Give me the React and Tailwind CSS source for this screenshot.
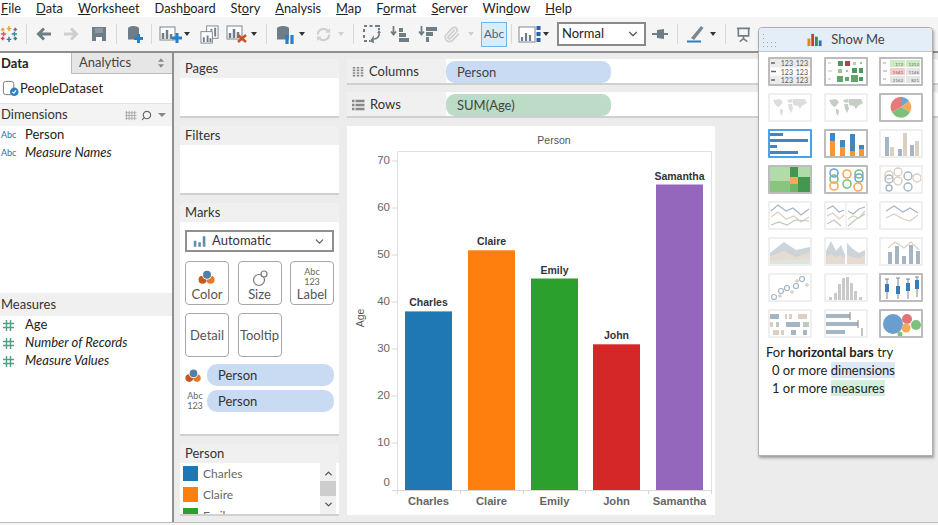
import React from 'react';
import { ChevronDown, ChevronUp, Paperclip, Search } from 'lucide-react';

const menus = [
  ['F', 'ile'], ['D', 'ata'], ['W', 'orksheet'], ['Dash', 'b', 'oard'], ['St', 'o', 'ry'], ['A', 'nalysis'],
  ['M', 'ap'], ['F', 'o', 'rmat'], ['S', 'erver'], ['Win', 'd', 'ow'], ['H', 'elp'],
];

const bars = [
  { name: 'Charles', age: 38, color: '#1f77b4', x: 405 },
  { name: 'Claire', age: 51, color: '#ff7f0e', x: 468 },
  { name: 'Emily', age: 45, color: '#2ca02c', x: 531 },
  { name: 'John', age: 31, color: '#d62728', x: 593 },
  { name: 'Samantha', age: 65, color: '#9467bd', x: 656 },
];

function MenuLabel({ parts }) {
  if (parts.length === 2) {
    return <span><span className="underline">{parts[0]}</span>{parts[1]}</span>;
  }
  return <span>{parts[0]}<span className="underline">{parts[1]}</span>{parts[2]}</span>;
}

function BarsIcon({ className = '' }) {
  return (
    <svg viewBox="0 0 20 16" className={className}>
      <rect x="1" y="7" width="3.5" height="8" fill="#5f8fae" />
      <rect x="7" y="9" width="3.5" height="6" fill="#5f8fae" />
      <rect x="13" y="1" width="3.5" height="14" fill="#5f8fae" />
    </svg>
  );
}

function ColorIcon({ className = '' }) {
  return (
    <svg viewBox="0 0 20 18" className={className}>
      <circle cx="5" cy="12" r="4.5" fill="#c9561d" />
      <circle cx="14" cy="12" r="4.5" fill="#e8772a" />
      <circle cx="10" cy="6.5" r="5.5" fill="#fff" />
      <circle cx="10" cy="6.5" r="4.5" fill="#4f81a8" />
    </svg>
  );
}

function AbcIcon() {
  return (
    <span className="flex flex-col items-center text-[9px] leading-[10px] text-[#666]">
      <span>Abc</span>
      <span>123</span>
    </span>
  );
}

function Caret({ className = '', light }) {
  return (
    <span className={`h-0 w-0 shrink-0 border-x-[3px] border-t-[4px] border-x-transparent ${light ? 'border-t-[#cfcfcf]' : 'border-t-[#333]'} ${className}`} />
  );
}

function Sep({ className = '' }) {
  return <span className={`h-[20px] w-px shrink-0 bg-[#d8d8d8] ${className}`} />;
}

function Toolbar() {
  return (
    <div className="flex h-[34px] items-center bg-[#f5f5f5] text-[#666]">
      <svg viewBox="0 0 20 20" className="h-[18px] w-[18px] shrink-0">
        <g strokeWidth="1.6">
          <path d="M10 1v6M7.5 4h5" stroke="#e8a13a" />
          <path d="M10 13v6M7.5 16h5" stroke="#3f6f9f" />
          <path d="M1 10h6M4 7.5v5" stroke="#e05a4f" />
          <path d="M13 10h6M16 7.5v5" stroke="#2a8f9f" />
          <path d="M3 3v4M1 5h4" stroke="#e8a13a" />
          <path d="M17 3v4M15 5h4" stroke="#8a5aa8" />
          <path d="M3 13v4M1 15h4" stroke="#c9406a" />
          <path d="M17 13v4M15 15h4" stroke="#3f6f9f" />
        </g>
      </svg>
      <Sep className="ml-[8px]" />
      <svg viewBox="0 0 16 16" className="ml-[9px] h-[16px] w-[16px] shrink-0">
        <path d="M15 8H3M8 2.5L2.5 8 8 13.5" stroke="#6f7d87" strokeWidth="3" fill="none" />
      </svg>
      <svg viewBox="0 0 16 16" className="ml-[11px] h-[16px] w-[16px] shrink-0">
        <path d="M1 8h12M8 2.5L13.5 8 8 13.5" stroke="#cfcfcf" strokeWidth="3" fill="none" />
      </svg>
      <svg viewBox="0 0 16 16" className="ml-[12px] h-[16px] w-[16px] shrink-0">
        <path d="M1 1h14v14H1z" fill="#6f7d87" />
        <path d="M4 2h8v5H4z" fill="#8d99a2" />
        <path d="M5 11h6v4H5z" fill="#fff" />
      </svg>
      <Sep className="ml-[9px]" />
      <svg viewBox="0 0 16 18" className="ml-[10px] h-[18px] w-[16px] shrink-0">
        <ellipse cx="6.5" cy="3.5" rx="5.5" ry="2.5" fill="#6f7d87" />
        <rect x="1" y="3.5" width="11" height="11" fill="#6f7d87" />
        <path d="M11.5 9v9M7 13.5h9" stroke="#2a7fc4" strokeWidth="3" />
      </svg>
      <Sep className="ml-[8px]" />
      <svg viewBox="0 0 24 18" className="ml-[7px] h-[18px] w-[24px] shrink-0">
        <rect x="1" y="2" width="15" height="13" fill="#fff" stroke="#7b8790" />
        <path d="M4 14V8M8 14V5M12 14V9" stroke="#6f7d87" strokeWidth="2.5" />
        <path d="M18 8v10M13 13h10" stroke="#2a7fc4" strokeWidth="3" />
      </svg>
      <Caret className="ml-px" />
      <svg viewBox="0 0 20 20" className="ml-[10px] h-[19px] w-[19px] shrink-0">
        <rect x="7" y="1" width="12" height="13" fill="#fff" stroke="#7b8790" />
        <rect x="1" y="7" width="12" height="12" fill="#fff" stroke="#7b8790" />
        <path d="M4 18v-5M8 18v-7M11 18v-4M12 6V4M16 12V3" stroke="#6f7d87" strokeWidth="2" />
      </svg>
      <svg viewBox="0 0 21 18" className="ml-[7px] h-[18px] w-[21px] shrink-0">
        <rect x="1" y="1" width="15" height="13" fill="#fff" stroke="#7b8790" />
        <path d="M4 13V8M8 13V4M12 13V7" stroke="#6f7d87" strokeWidth="2.5" />
        <path d="M12 10l8 7M20 10l-8 7" stroke="#c9502a" strokeWidth="2.5" />
      </svg>
      <Caret className="ml-[4px]" />
      <Sep className="ml-[9px]" />
      <svg viewBox="0 0 19 19" className="ml-[9px] h-[19px] w-[19px] shrink-0">
        <ellipse cx="7" cy="3.5" rx="6" ry="2.5" fill="#6f7d87" />
        <rect x="1" y="3.5" width="12" height="11" fill="#6f7d87" />
        <path d="M11 10v9M16 10v9" stroke="#2a7fc4" strokeWidth="3.2" />
      </svg>
      <Caret className="ml-[4px]" />
      <svg viewBox="0 0 16 16" className="ml-[11px] h-[15px] w-[15px] shrink-0">
        <path d="M2 8a6 6 0 0 1 10.5-4M14 8a6 6 0 0 1-10.5 4" stroke="#cfcfcf" strokeWidth="2.4" fill="none" />
        <path d="M10 6h5V1zM6 10H1v5z" fill="#cfcfcf" />
      </svg>
      <Caret light className="ml-[7px]" />
      <Sep className="ml-[9px]" />
      <svg viewBox="0 0 18 18" className="ml-[9px] h-[18px] w-[18px] shrink-0">
        <path d="M1 1h3M6.5 1h3M12 1h5M1 4v3M1 10v3M1 16h3M6 16h1M16 3v2" stroke="#6f7d87" strokeWidth="2" fill="none" />
        <path d="M16 8a5 5 0 0 1-5 6M8 16l2-3v4z" stroke="#6f7d87" strokeWidth="1.7" fill="none" />
        <path d="M14 8h4l-2-3z" fill="#6f7d87" />
      </svg>
      <svg viewBox="0 0 20 18" className="ml-[9px] h-[18px] w-[20px] shrink-0">
        <path d="M3.5 1v8M1 6.5l2.5 3 2.5-3" stroke="#6f7d87" strokeWidth="1.8" fill="none" />
        <path d="M9 3h4v4H9zM9 8h7v4H9zM9 13h10v4H9z" fill="#6f7d87" />
      </svg>
      <svg viewBox="0 0 19 18" className="ml-[8px] h-[18px] w-[19px] shrink-0">
        <path d="M3.5 1v8M1 6.5l2.5 3 2.5-3" stroke="#6f7d87" strokeWidth="1.8" fill="none" />
        <path d="M8 2h11v4H8zM8 7h7v4H8zM8 12h3v5H8z" fill="#6f7d87" />
      </svg>
      <Paperclip className="ml-[6px] h-[17px] w-[17px] shrink-0 text-[#d0d0d0]" strokeWidth={2.5} />
      <Caret light className="ml-[8px]" />
      <span className="ml-[7px] flex h-[25px] w-[26px] shrink-0 items-center justify-center border border-[#6db5ea] bg-[#d9ecf9] text-[12px] text-[#4d6578]">Abc</span>
      <Sep className="ml-[4px]" />
      <svg viewBox="0 0 23 18" className="ml-[6px] h-[18px] w-[23px] shrink-0">
        <rect x="1" y="2" width="16" height="15" fill="#fff" stroke="#7b8790" />
        <path d="M4 16v-4M8 16V8M12 16v-6" stroke="#6f7d87" strokeWidth="2.2" />
        <path d="M18.5 1h4v4h-4zM18.5 7h4v4h-4zM18.5 13h4v4h-4z" fill="#2a5fa8" />
      </svg>
      <Caret className="ml-[2px]" />
      <div className="ml-[8px] flex h-[24px] w-[89px] shrink-0 items-center justify-between border-2 border-[#8a8a8a] bg-white pl-[3px] pr-[4px] text-[13px] text-[#222]">
        <span>Normal</span>
        <ChevronDown className="h-[14px] w-[14px] text-[#555]" />
      </div>
      <svg viewBox="0 0 16 12" className="ml-[6px] h-[12px] w-[16px] shrink-0">
        <path d="M0 6h5M12 6h4" stroke="#6f7d87" strokeWidth="2" />
        <path d="M5 2l7-1v10l-7-1z" fill="#6f7d87" />
      </svg>
      <Sep className="ml-[9px]" />
      <svg viewBox="0 0 19 18" className="ml-[9px] h-[18px] w-[19px] shrink-0">
        <path d="M4 13L14 1l2.5 2L7 15z" fill="#7b8790" />
        <path d="M0 16.5h14" stroke="#2a7fc4" strokeWidth="2" />
      </svg>
      <Caret className="ml-[4px]" />
      <Sep className="ml-[9px]" />
      <svg viewBox="0 0 16 17" className="ml-[10px] h-[17px] w-[15px] shrink-0">
        <path d="M1 2h14M2.5 2v8h11V2M8 10v3M4 16l4-3 4 3" stroke="#6f7d87" strokeWidth="1.7" fill="none" />
      </svg>
    </div>
  );
}

function FieldRow({ icon, label, italic }) {
  return (
    <div className="flex h-[18px] items-center text-[13px] text-[#222]">
      <span className="flex w-[25px] justify-start pl-[1px]">{icon}</span>
      <span className={italic ? 'italic' : ''}>{label}</span>
    </div>
  );
}

function HashIcon() {
  return (
    <svg viewBox="0 0 11 11" className="ml-[2px] h-[11px] w-[11px]">
      <path d="M3.5 0v11M7.5 0v11M0 3.5h11M0 7.5h11" stroke="#4fa07f" strokeWidth="1.4" />
    </svg>
  );
}

function DataPane() {
  const abc = <span className="text-[9px] text-[#2f6da8]">Abc</span>;
  return (
    <aside className="flex w-[174px] shrink-0 flex-col border-r-2 border-[#8f8f8f] bg-white">
      <div className="flex h-[21px] items-stretch text-[13px]">
        <div className="flex w-[71px] items-center pl-[1px] font-bold text-[#222]">Data</div>
        <div className="flex flex-1 items-center justify-between border-b border-l border-[#bbb] bg-[#e6e6e6] pl-[7px] pr-[8px] text-[#444]">
          <span>Analytics</span>
          <svg viewBox="0 0 7 11" className="h-[10px] w-[6px]">
            <path d="M3.5 0L7 4H0zM3.5 11L0 7h7z" fill="#888" />
          </svg>
        </div>
      </div>
      <div className="flex h-[30px] items-center border-b border-[#e3e3e3] pl-[2px] text-[13px] text-[#222]">
        <svg viewBox="0 0 18 18" className="mr-[1px] h-[17px] w-[17px]">
          <rect x="1.5" y="1.5" width="11" height="14" rx="2.5" fill="#fff" stroke="#777" />
          <circle cx="13" cy="12.5" r="4.5" fill="#2f7fc4" />
          <path d="M11 12.5l1.5 1.5 2.5-3" stroke="#fff" strokeWidth="1.2" fill="none" />
        </svg>
        PeopleDataset
      </div>
      <div className="flex h-[22px] items-center justify-between bg-[#f3f3f3] pl-[1px] pr-[6px] text-[13px] text-[#333]">
        <span>Dimensions</span>
        <span className="flex items-center gap-[4px] text-[#999]">
          <svg viewBox="0 0 12 12" className="h-[11px] w-[12px]">
            <path d="M1 1v10M4 1v10M7 1v10M10 1v10M0 3h12M0 6h12M0 9h12" stroke="#a8a8a8" strokeWidth="1" />
          </svg>
          <Search className="h-[11px] w-[11px] -scale-x-100 text-[#666]" strokeWidth={2.5} />
          <span className="ml-[2px] h-0 w-0 border-x-[4px] border-t-[4px] border-x-transparent border-t-[#888]" />
        </span>
      </div>
      <div className="flex h-[167px] flex-col">
        <FieldRow icon={abc} label="Person" />
        <FieldRow icon={abc} label="Measure Names" italic />
      </div>
      <div className="flex h-[23px] items-center bg-[#f0f0f0] pl-[1px] text-[13px] text-[#333]">Measures</div>
      <div className="flex flex-col">
        <FieldRow icon={<HashIcon />} label="Age" />
        <FieldRow icon={<HashIcon />} label="Number of Records" italic />
        <FieldRow icon={<HashIcon />} label="Measure Values" italic />
      </div>
    </aside>
  );
}

function Card({ title, className = '', children }) {
  return (
    <section className={`flex flex-col overflow-hidden rounded-t-[6px] border-b-2 border-[#d0d0d0] bg-white ${className}`}>
      <div className="flex h-[19px] shrink-0 items-center bg-[#f0f0f0] pl-[5px] pt-px text-[13px] text-[#333]">{title}</div>
      {children}
    </section>
  );
}

function MarkButton({ label, icon }) {
  return (
    <div className={`flex h-[44px] w-[44px] flex-col items-center rounded-[4px] border-[1.5px] border-[#a8a8a8] text-[13px] leading-[15px] text-[#555] ${icon ? 'justify-end pb-[2px]' : 'justify-center'}`}>
      {icon}
      <span>{label}</span>
    </div>
  );
}

function Pill({ children }) {
  return (
    <div className="flex h-[22px] flex-1 items-center rounded-[10px] bg-[#c9daf3] pl-[11px] pt-px text-[13px] text-[#333]">{children}</div>
  );
}

function Cards() {
  return (
    <div className="flex w-[159px] shrink-0 flex-col gap-[8px]">
      <Card title="Pages" className="h-[59px]" />
      <Card title="Filters" className="h-[69px]" />
      <Card title="Marks" className="h-[233px]">
        <div className="flex flex-col px-[5px] pt-[8px]">
          <div className="flex h-[22px] items-center justify-between border-2 border-[#8f8f8f] px-[6px] text-[13px] text-[#333]">
            <span className="flex items-center gap-[4px]">
              <BarsIcon className="h-[13px] w-[15px]" />
              Automatic
            </span>
            <ChevronDown className="h-[13px] w-[13px] text-[#555]" />
          </div>
          <div className="mt-[9px] grid grid-cols-[44px_44px_44px] justify-between gap-y-[8px]">
            <MarkButton label="Color" icon={<ColorIcon className="mb-[2px] h-[16px] w-[18px]" />} />
            <MarkButton label="Size" icon={
              <svg viewBox="0 0 18 18" className="h-[18px] w-[18px]">
                <circle cx="8" cy="11" r="5.5" fill="#fff" stroke="#777" strokeWidth="1.2" />
                <circle cx="13" cy="5" r="3" fill="#fff" stroke="#777" strokeWidth="1.2" />
              </svg>
            } />
            <MarkButton label="Label" icon={<AbcIcon />} />
            <MarkButton label="Detail" />
            <MarkButton label="Tooltip" />
          </div>
          <div className="mt-[7px] flex items-center gap-[2px]">
            <span className="w-[20px]"><ColorIcon className="h-[17px] w-[17px]" /></span>
            <Pill>Person</Pill>
          </div>
          <div className="mt-[4px] flex items-center gap-[2px]">
            <span className="flex w-[20px] justify-center"><AbcIcon /></span>
            <Pill>Person</Pill>
          </div>
        </div>
      </Card>
      <Card title="Person" className="h-[72px]">
        <div className="flex min-h-0 flex-1">
          <div className="flex-1 overflow-hidden pl-[3px] text-[12px] text-[#666]">
            {bars.slice(0, 3).map((b) => (
              <div key={b.name} className="flex h-[21px] items-center gap-[5px]">
                <span className="h-[15px] w-[15px]" style={{ backgroundColor: b.color }} />
                {b.name}
              </div>
            ))}
          </div>
          <div className="mr-[3px] flex w-[16px] flex-col items-center bg-[#f0f0f0]">
            <ChevronUp className="mt-[5px] h-[11px] w-[11px] text-[#555]" strokeWidth={3} />
            <span className="mt-[2px] h-[15px] w-full bg-[#cdcdcd]" />
            <ChevronDown className="mt-[3px] h-[11px] w-[11px] text-[#555]" strokeWidth={3} />
          </div>
        </div>
      </Card>
    </div>
  );
}

function Shelf({ icon, title, pill, pillClass }) {
  return (
    <div className="flex h-[26px] w-full items-stretch rounded-t-[3px] border-b-2 border-[#d0d0d0] bg-white">
      <div className="flex w-[99px] items-center gap-[5px] bg-[#f0f0f0] pl-[5px] pt-px text-[13px] text-[#333]">
        {icon}
        {title}
      </div>
      <div className={`mt-[2px] flex h-[22px] w-[165px] items-center rounded-[9px] pl-[11px] pt-px text-[13px] text-[#444] ${pillClass}`}>{pill}</div>
    </div>
  );
}

function Chart() {
  const ticks = [70, 60, 50, 40, 30, 20, 10, 0];
  const y = (v) => 490 - v * 4.7;
  return (
    <svg viewBox="347 126 368 389" className="mt-px h-[389px] w-[368px] bg-white font-['Liberation_Sans',sans-serif]">
      <text x="554" y="144" textAnchor="middle" fontSize="10.5" fill="#555">Person</text>
      <text x="364" y="318" textAnchor="middle" fontSize="10.5" fill="#555" transform="rotate(-90 364 318)">Age</text>
      <path d="M397.5 490V151.5H711.5V490" fill="none" stroke="#e0e0e0" />
      <line x1="392" x2="712" y1="490.5" y2="490.5" stroke="#d8d8d8" />
      {[397.5, 460.5, 523.5, 585.5, 648.5, 711.5].map((x) => (
        <line key={x} x1={x} x2={x} y1="490" y2="494" stroke="#d8d8d8" />
      ))}
      {ticks.map((t) => (
        <g key={t}>
          {t > 0 && <line x1="392" x2="397" y1={y(t)} y2={y(t)} stroke="#d8d8d8" />}
          <text x="390" y={t === 0 ? 486 : y(t) + 2.5} textAnchor="end" fontSize="11.5" fill="#666">{t}</text>
        </g>
      ))}
      {bars.map((b) => (
        <g key={b.name}>
          <rect x={b.x} y={y(b.age)} width="47" height={b.age * 4.7} fill={b.color} />
          <text x={b.x + 23.5} y={y(b.age) - 5} textAnchor="middle" fontSize="10.5" fontWeight="700" fill="#333">{b.name}</text>
          <text x={b.x + 23.5} y="505" textAnchor="middle" fontSize="11.2" fontWeight="700" fill="#666">{b.name}</text>
        </g>
      ))}
    </svg>
  );
}

function Tile({ active, strong, children }) {
  const border = active
    ? 'border-2 border-[#4aa3ea]'
    : strong
      ? 'border-2 border-[#bcbcbc]'
      : 'border-2 border-[#efefef]';
  return <div className={`h-[29px] w-[44px] overflow-hidden rounded-[1px] bg-white ${border}`}>{children}</div>;
}

function Thumb({ dim, children }) {
  return <svg viewBox="0 0 40 25" className="block h-full w-full" opacity={dim ? 0.7 : 0.9}>{children}</svg>;
}

const bl = '#7f97ab';
const tn = '#cdbba8';
const gn = '#9cb89c';

const worldPath = 'M3 5l7-1 3 3-3 4-2 1-3-3zM10 14l3 1-1 6-2-3zM17 5l5-1 1 3-4 1zM18 9l4 0 1 5-2 4-2-4zM23 4l12 0 2 4-5 3-2 3-2-3-5-1z';

const tiles = [
  { strong: true, body: <Thumb><rect width="40" height="25" fill="#e9e9e9" /><rect y="8.5" width="40" height="8" fill="#fff" /><path d="M1 4h4M1 12.5h5M1 21h4" stroke="#555" strokeWidth="1.5" /><g fontSize="7" fill="#444" textAnchor="end"><text x="23" y="7">123</text><text x="38" y="7">123</text><text x="23" y="15.5">123</text><text x="38" y="15.5">123</text><text x="23" y="24">123</text><text x="38" y="24">123</text></g></Thumb> },
  { strong: true, body: <Thumb><path d="M2 4h3M2 12h4M2 20h3" stroke="#bbb" /><rect x="12" y="2" width="5" height="5" fill="#3d8a4c" /><rect x="19" y="2" width="5" height="5" fill="#a82f35" /><rect x="27" y="3" width="3" height="3" fill="#a9d3a0" /><rect x="34" y="3" width="2" height="2" fill="#8cc282" /><rect x="12" y="10" width="4" height="4" fill="#8cc282" /><rect x="20" y="11" width="2" height="2" fill="#8cc282" /><rect x="26" y="9" width="5" height="5" fill="#3d8a4c" /><rect x="33" y="9" width="4" height="5" fill="#3d8a4c" /><rect x="11" y="17" width="6" height="6" fill="#4f9c5a" /><rect x="19" y="18" width="4" height="4" fill="#4f9c5a" /><rect x="25" y="16" width="7" height="7" fill="#4f9c5a" /><rect x="33" y="18" width="4" height="4" fill="#3d8a4c" /></Thumb> },
  { strong: true, body: <Thumb><path d="M2 4h3M2 12h4M2 20h3" stroke="#999" /><rect x="9" y="1" width="15" height="7" fill="#c9e8bd" /><rect x="25" y="1" width="14" height="7" fill="#c9e8bd" /><rect x="9" y="9" width="15" height="7" fill="#f5c6c6" /><rect x="25" y="9" width="14" height="7" fill="#e3e3e3" /><rect x="9" y="17" width="15" height="7" fill="#e3e3e3" /><rect x="25" y="17" width="14" height="7" fill="#e3e3e3" /><g fontSize="4.5" fill="#555" textAnchor="end"><text x="22" y="6.5">172</text><text x="38" y="6.5">1212</text><text x="22" y="14.5">1541</text><text x="38" y="14.5">1146</text><text x="22" y="22.5">2162</text><text x="38" y="22.5">821</text></g></Thumb> },
  { body: <Thumb dim><path d={worldPath} fill="#d0d0d0" /></Thumb> },
  { body: <Thumb dim><path d={worldPath} fill="#adbaad" /></Thumb> },
  { strong: true, body: <Thumb><path d="M20 12V2a10 10 0 0 1 8 4z" fill="#5b9bd5" /><path d="M20 12l8-6a10 10 0 0 1 1 11z" fill="#f5a04a" /><path d="M20 12l9 5a10 10 0 0 1-18 0z" fill="#6dbb6d" /><path d="M20 12l-9 5A10 10 0 0 1 20 2z" fill="#e66b6b" /></Thumb> },
  { active: true, body: <Thumb><rect y="2" width="13" height="3" fill="#2f78b5" /><rect y="8" width="38" height="3" fill="#2f78b5" /><rect y="14" width="7" height="3" fill="#2f78b5" /><rect y="20" width="28" height="3" fill="#2f78b5" /></Thumb> },
  { strong: true, body: <Thumb><rect x="4" y="2" width="5" height="8" fill="#2f78b5" /><rect x="4" y="10" width="5" height="15" fill="#f58b22" /><rect x="14" y="9" width="5" height="7" fill="#2f78b5" /><rect x="14" y="16" width="5" height="9" fill="#f58b22" /><rect x="24" y="3" width="5" height="17" fill="#2f78b5" /><rect x="24" y="20" width="5" height="5" fill="#f58b22" /><rect x="33" y="14" width="5" height="4" fill="#2f78b5" /><rect x="33" y="18" width="5" height="7" fill="#f58b22" /></Thumb> },
  { body: <Thumb dim><rect x="4" y="6" width="4" height="19" fill={bl} /><rect x="9" y="16" width="4" height="9" fill={tn} /><rect x="17" y="18" width="4" height="7" fill={bl} /><rect x="22" y="2" width="4" height="23" fill={tn} /><rect x="29" y="14" width="4" height="11" fill={bl} /><rect x="34" y="10" width="4" height="15" fill={tn} /></Thumb> },
  { strong: true, body: <Thumb><rect width="20" height="14" fill="#a9d89f" /><rect y="14" width="20" height="11" fill="#7cc072" /><rect x="20" width="8" height="10" fill="#2f8c3f" /><rect x="20" y="10" width="8" height="7" fill="#f5a04a" /><rect x="20" y="17" width="8" height="8" fill="#5fae57" /><rect x="28" width="12" height="10" fill="#a9d89f" /><rect x="28" y="10" width="12" height="15" fill="#2f8c3f" /></Thumb> },
  { strong: true, body: <Thumb><g fill="none" strokeWidth="1.6"><circle cx="8" cy="6" r="4" stroke="#5b9bd5" /><circle cx="8" cy="12" r="4" stroke="#6dbb6d" /><circle cx="8" cy="19" r="4" stroke="#f5a04a" /><circle cx="21" cy="7" r="4" stroke="#f5a04a" /><circle cx="21" cy="17" r="4" stroke="#6dbb6d" /><circle cx="33" cy="7" r="4" stroke="#6dbb6d" /><circle cx="33" cy="11" r="4" stroke="#5b9bd5" /><circle cx="32" cy="20" r="4" stroke="#f5a04a" /></g></Thumb> },
  { body: <Thumb dim><g fill="none" strokeWidth="1.4"><circle cx="8" cy="8" r="4" stroke={tn} /><circle cx="8" cy="12" r="4" stroke={bl} /><circle cx="8" cy="21" r="3" stroke={bl} /><circle cx="17" cy="5" r="4" stroke={tn} /><circle cx="17" cy="14" r="4" stroke={tn} /><circle cx="27" cy="9" r="4" stroke={bl} /><circle cx="27" cy="20" r="4" stroke={bl} /><circle cx="36" cy="11" r="4" stroke={tn} /></g></Thumb> },
  { body: <Thumb dim><g fill="none" strokeWidth="1.2"><path d="M1 8l7-6 8 6 7-3 8 7 8-6" stroke={bl} /><path d="M1 14l7-5 8 7 8-3 7 6 8-5" stroke={tn} /><path d="M1 22l8-3 8 3 8-5 14 1" stroke={gn} /></g></Thumb> },
  { body: <Thumb dim><path d="M20 0v25" stroke="#ddd" /><g fill="none" strokeWidth="1.2"><path d="M1 6l6-3 6 6 5-2" stroke={bl} /><path d="M1 13l6-3 6 6 5-4" stroke={tn} /><path d="M1 21l7-4 7 6" stroke={gn} /><path d="M22 8l5 3 6-5 6-2" stroke={bl} /><path d="M22 16l5-3 6 2 6-7" stroke={tn} /><path d="M22 23l7-6 10-6" stroke={gn} /></g></Thumb> },
  { body: <Thumb dim><g fill="none" strokeWidth="1.2"><path d="M5 8l8-5 9 6 7-4 8 5" stroke={bl} /><path d="M5 15l8-4 9 5 7 2 8-6" stroke={tn} /></g></Thumb> },
  { body: <Thumb dim><path d="M0 14l14-11 12 8 14-3v17H0z" fill="#b7c1ca" /><path d="M0 17l14-5 12 6 14-5v12H0z" fill="#dccdbd" /><path d="M0 22l14-2 12 1 14-2v6H0z" fill="#cfdccf" /></Thumb> },
  { body: <Thumb dim><path d="M0 12l5-10 5 10 5-6 4 10v9H0z" fill="#b7c1ca" /><path d="M0 18l5-3 5 3 5-2 4 3v6H0z" fill="#dccdbd" /><path d="M21 4l6 6 6 4 6-3v14H21z" fill="#b7c1ca" /><path d="M21 16l6 2 6 1 6-3v9H21z" fill="#dccdbd" /><path d="M20 0v25" stroke="#fff" /></Thumb> },
  { body: <Thumb dim><rect x="7" y="13" width="4" height="12" fill={bl} /><rect x="14" y="7" width="4" height="18" fill={bl} /><rect x="21" y="17" width="4" height="8" fill={bl} /><rect x="28" y="6" width="4" height="19" fill={bl} /><rect x="35" y="12" width="4" height="13" fill={bl} /><path d="M7 9l7-6 9 6 7-6 8 8" stroke={tn} fill="none" strokeWidth="1.2" /></Thumb> },
  { body: <Thumb dim><g fill="none" stroke={bl} strokeWidth="1.2"><circle cx="4" cy="22" r="2.5" /><circle cx="11" cy="16" r="2.5" /><circle cx="17" cy="13" r="2.5" /><circle cx="26" cy="11" r="2.5" /><circle cx="32" cy="4" r="2.5" /></g><path d="M8 21h4M10 19v4M20 17h4M22 15v4M25 6h4M27 4v4M35 10h4M37 8v4" stroke={tn} strokeWidth="1.4" /></Thumb> },
  { body: <Thumb dim><rect x="3" y="22" width="3" height="3" fill="#b5b5b5" /><rect x="8" y="18" width="3" height="7" fill="#b5b5b5" /><rect x="12" y="9" width="3" height="16" fill="#b5b5b5" /><rect x="16" y="3" width="3" height="22" fill="#b5b5b5" /><rect x="20" y="2" width="3" height="23" fill="#b5b5b5" /><rect x="24" y="8" width="3" height="17" fill="#b5b5b5" /><rect x="28" y="16" width="3" height="9" fill="#b5b5b5" /><rect x="33" y="22" width="3" height="3" fill="#b5b5b5" /></Thumb> },
  { strong: true, body: <Thumb><path d="M6 4v20M17 3v21M27 4v20M36 2v20M4 4h4M15 3h4M25 4h4M34 2h4" stroke="#777" strokeWidth="1" /><rect x="4" y="9" width="4" height="8" fill="#1f6fb5" /><rect x="15" y="11" width="4" height="8" fill="#1f6fb5" /><rect x="25" y="8" width="4" height="8" fill="#1f6fb5" /><rect x="34" y="5" width="4" height="9" fill="#1f6fb5" /></Thumb> },
  { body: <Thumb dim><rect y="3" width="9" height="5" fill={bl} /><rect x="15" y="3" width="2" height="5" fill={tn} /><rect x="19" y="3" width="3" height="5" fill={tn} /><rect x="28" y="3" width="9" height="5" fill={tn} /><rect y="11" width="3" height="5" fill={tn} /><rect x="6" y="11" width="3" height="5" fill={gn} /><rect x="16" y="11" width="14" height="5" fill={bl} /><rect x="33" y="11" width="6" height="5" fill={gn} /><rect x="3" y="19" width="6" height="5" fill={tn} /><rect x="11" y="19" width="3" height="5" fill={tn} /><rect x="21" y="19" width="5" height="5" fill={bl} /><rect x="33" y="19" width="4" height="5" fill={bl} /></Thumb> },
  { body: <Thumb dim><rect y="3" width="24" height="4" fill={bl} /><path d="M24 1v8" stroke="#555" /><rect y="11" width="32" height="4" fill={bl} /><path d="M32 9v8" stroke="#555" /><rect y="19" width="19" height="4" fill={bl} /><path d="M36 17v8" stroke="#555" /></Thumb> },
  { strong: true, body: <Thumb><circle cx="12" cy="13" r="10" fill="#5b93c9" /><circle cx="26" cy="8" r="5" fill="#e06666" /><circle cx="35" cy="14" r="5" fill="#6dbb6d" /><circle cx="25" cy="17" r="4.5" fill="#f5a04a" /><circle cx="19" cy="23" r="2.5" fill="#6dbb6d" /></Thumb> },
];

function ShowMe() {
  return (
    <div className="absolute left-[758px] top-[27px] flex h-[429px] w-[175px] flex-col rounded-t-[4px] border border-[#b0b0b0] bg-white shadow-[1px_2px_3px_rgba(0,0,0,0.35)]">
      <div className="relative flex h-[24px] shrink-0 items-center justify-center gap-[7px] rounded-t-[4px] border-b border-[#c8c8c8] bg-[#e4eef8] text-[13px] text-[#444]">
        <svg viewBox="0 0 14 14" className="absolute left-[3px] top-[5px] h-[14px] w-[14px]">
          <path d="M1 1h1v1H1zM1 5h1v1H1zM1 9h1v1H1zM5 9h1v1H5zM9 9h1v1H9zM13 9h1v1h-1zM1 13h1v1H1zM5 13h1v1H5zM9 13h1v1H9zM13 13h1v1h-1z" fill="#9aa7b3" />
        </svg>
        <svg viewBox="0 0 18 16" className="h-[15px] w-[18px]">
          <rect x="1" y="7" width="3" height="8" fill="#d5891f" />
          <rect x="5" y="2" width="3" height="13" fill="#c2452d" />
          <rect x="9" y="5" width="3" height="10" fill="#3d8a4c" />
          <rect x="13" y="9" width="3" height="6" fill="#2f6fb5" />
        </svg>
        Show Me
      </div>
      <div className="grid grid-cols-[44px_44px_44px] justify-between gap-y-[7px] pl-[9px] pr-[9px] pt-[5px]">
        {tiles.map((t, i) => (
          <Tile key={i} active={t.active} strong={t.strong}>{t.body}</Tile>
        ))}
      </div>
      <div className="pl-[7px] pt-[5px] text-[13px] leading-[18px] text-[#222]">
        <div>For <span className="font-bold">horizontal bars</span> try</div>
        <div className="pl-[6px]">0 or more <span className="bg-[#dbe8f8]">dimensions</span></div>
        <div className="pl-[6px]">1 or more <span className="bg-[#d5eedd]">measures</span></div>
      </div>
    </div>
  );
}

export default function App() {
  return (
    <div className="relative h-[525px] w-[938px] overflow-hidden bg-white font-['Lato','Noto_Sans',sans-serif]">
      <nav className="flex h-[17px] items-center gap-[15px] bg-white pl-[1px] text-[12.8px] text-[#222]">
        {menus.map((m) => <MenuLabel key={m.join('')} parts={m} />)}
      </nav>
      <Toolbar />
      <div className="flex h-[471px] border-t-2 border-[#8f8f8f] bg-[#ececec]">
        <DataPane />
        <div className="flex flex-1 gap-[8px] pl-[6px] pt-[6px]">
          <Cards />
          <div className="flex flex-1 flex-col items-start gap-[7px]">
            <Shelf
              icon={<svg viewBox="0 0 12 12" className="h-[12px] w-[12px]"><path d="M2 1v10M6 1v10M10 1v10" stroke="#888" strokeWidth="2.5" strokeDasharray="1.6 1" /></svg>}
              title="Columns"
              pill="Person"
              pillClass="bg-[#c9daf3]"
            />
            <Shelf
              icon={<svg viewBox="0 0 13 12" className="h-[12px] w-[13px]"><path d="M0 2h13M0 6h13M0 10h13" stroke="#888" strokeWidth="2.5" strokeDasharray="2.5 1 9" /></svg>}
              title="Rows"
              pill="SUM(Age)"
              pillClass="bg-[#bcdcc8]"
            />
            <Chart />
          </div>
        </div>
      </div>
      <div className="h-[3px] border-t border-[#bbb] bg-[#f5f5f5]" />
      <ShowMe />
    </div>
  );
}
